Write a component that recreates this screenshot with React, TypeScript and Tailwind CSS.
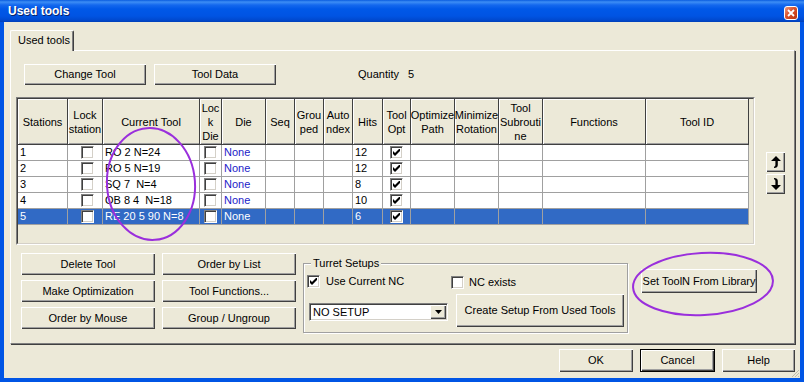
import React from 'react'

const raised = 'shadow-[inset_1px_1px_0_#ffffff,inset_-1px_-1px_0_#404040,inset_-2px_-2px_0_#a0a0a0]'
const sunken = 'border border-t-[#808080] border-l-[#808080] border-r-white border-b-white shadow-[inset_1px_1px_0_#404040,inset_-1px_-1px_0_#d4d0c8]'

const cols = [
  { w: 'w-[50px]', h: 'Stations' },
  { w: 'w-[35px]', h: 'Lock\nstation' },
  { w: 'w-[97px]', h: 'Current Tool' },
  { w: 'w-[22px]', h: 'Loc\nk\nDie' },
  { w: 'w-[44px]', h: 'Die' },
  { w: 'w-[29px]', h: 'Seq' },
  { w: 'w-[29px]', h: 'Grou\nped' },
  { w: 'w-[29px]', h: 'Auto\nndex' },
  { w: 'w-[30px]', h: 'Hits' },
  { w: 'w-[28px]', h: 'Tool\nOpt' },
  { w: 'w-[44px]', h: 'Optimize\nPath' },
  { w: 'w-[44px]', h: 'Minimize\nRotation' },
  { w: 'w-[44px]', h: 'Tool\nSubrouti\nne' },
  { w: 'w-[103px]', h: 'Functions' },
  { w: 'w-[103px]', h: 'Tool ID' },
]

const rows = [
  { st: '1', tool: 'RO 2 N=24', hits: '12', sel: false },
  { st: '2', tool: 'RO 5 N=19', hits: '12', sel: false },
  { st: '3', tool: 'SQ 7  N=4', hits: '8', sel: false },
  { st: '4', tool: 'OB 8 4  N=18', hits: '10', sel: false },
  { st: '5', tool: 'RE 20 5 90 N=8', hits: '6', sel: true },
]

function Btn({ className = '', children, def = false }: { className?: string; children?: React.ReactNode; def?: boolean }) {
  return (
    <div className={`shrink-0 flex items-center justify-center bg-[#ECE9D8] ${raised} ${def ? 'border border-black' : ''} ${className}`}>
      {children}
    </div>
  )
}

function Check({ checked = false }: { checked?: boolean }) {
  return (
    <div className={`shrink-0 w-[13px] h-[13px] bg-white flex items-center justify-center ${sunken}`}>
      {checked && (
        <svg width="7" height="7" viewBox="0 0 7 7">
          <polygon points="0,2 2,4 7,-1 7,2 2,7 0,5" fill="black" />
        </svg>
      )}
    </div>
  )
}

function Arrow({ down = false }: { down?: boolean }) {
  return (
    <svg width="10" height="12" viewBox="0 0 10 12" className={down ? 'rotate-180 -scale-x-100' : ''}>
      <path d="M5 0 L10 5 L6.8 5 L6.8 9 Q6.8 12 3 12 L3 10.8 Q4.4 10.5 4.4 9 L4.4 5 L0 5 Z" fill="black" />
    </svg>
  )
}

function Grid() {
  return (
    <div className="shrink-0 w-[739px] h-[148px] border border-t-[#808080] border-l-[#808080] border-r-white border-b-white">
      <div className="w-full h-full overflow-hidden bg-[#ECE9D8] border border-t-[#404040] border-l-[#404040] border-r-[#d4d0c8] border-b-[#d4d0c8]">
        {/* Header */}
        <div className="flex w-[731px] h-[46px] border-b border-b-[#404040]">
          {cols.map((c) => (
            <div
              key={c.h}
              className={`${c.w} shrink-0 h-full flex items-center justify-center text-center whitespace-pre leading-[14px] overflow-hidden border-r border-r-[#404040] shadow-[inset_1px_1px_0_#ffffff,inset_0_-1px_0_#a0a0a0]`}
            >
              {c.h}
            </div>
          ))}
        </div>
        {/* Rows */}
        {rows.map((r) => (
          <div key={r.st} className={`flex w-[731px] h-[16px] ${r.sel ? 'bg-[#316AC5] text-white' : 'bg-white'}`}>
            {cols.map((c, i) => (
              <div
                key={i}
                className={`${c.w} shrink-0 h-full flex items-center overflow-hidden whitespace-pre border-r border-b border-[#a0a0a0] ${
                  i === 1 || i === 3 || i === 9 ? 'justify-center' : 'pl-[2px]'
                } ${i === 1 ? 'pl-[5px]' : ''}`}
              >
                {i === 0 && r.st}
                {i === 1 && <Check />}
                {i === 2 && r.tool}
                {i === 3 && <Check />}
                {i === 4 && <span className={r.sel ? 'text-white' : 'text-[#1c1cc8]'}>None</span>}
                {i === 8 && r.hits}
                {i === 9 && <Check checked />}
              </div>
            ))}
          </div>
        ))}
      </div>
    </div>
  )
}

export default function App() {
  return (
    <div className="relative w-[804px] h-[382px] overflow-hidden flex flex-col bg-[#0055E5] font-['Liberation_Sans',Arial,sans-serif] text-[11px] text-black">
      {/* Title bar */}
      <div className="h-[22px] shrink-0 flex items-start justify-between pl-[8px] pr-[6px] bg-[linear-gradient(180deg,#0A5CDF_0px,#3D8EF5_2px,#1468EE_5px,#0058E8_9px,#0054E3_16px,#0049CF_20px,#003FB8_22px)]">
        <span className="mt-[4px] text-white font-bold text-[12px] leading-[15px] [text-shadow:1px_1px_0_#0a246a]">Used tools</span>
        <div className="mt-[6px] w-[14px] h-[14px] rounded-[3px] border border-white bg-[linear-gradient(135deg,#EE9A7E,#D9502A_45%,#B7340F)] flex items-center justify-center">
          <svg width="8" height="8" viewBox="0 0 8 8">
            <path d="M1 1 L7 7 M7 1 L1 7" stroke="white" strokeWidth="1.8" />
          </svg>
        </div>
      </div>

      {/* Body */}
      <div className="relative flex-1 mx-[4px] mb-[4px] bg-[#ECE9D8] flex flex-col">
        {/* Tab */}
        <div className="relative z-10 ml-[6px] mt-[8px] -mb-[1px] w-[64px] h-[21px] bg-[#ECE9D8] border-t border-l border-r border-t-white border-l-white border-r-[#404040] shadow-[inset_-1px_0_0_#808080] rounded-t-[2px] flex items-center pl-[7px] pb-[1px]">
          Used tools
        </div>

        {/* Tab page */}
        <div className="ml-[6px] w-[785px] h-[294px] border border-t-white border-l-white border-r-[#808080] border-b-[#808080] shadow-[1px_1px_0_#404040] flex flex-col">
          <div className="mt-[13px] ml-[13px] h-[21px] flex items-center">
            <Btn className="w-[122px] h-[21px]">Change Tool</Btn>
            <Btn className="ml-[8px] w-[122px] h-[21px]">Tool Data</Btn>
            <span className="ml-[82px]">Quantity</span>
            <span className="ml-[9px]">5</span>
          </div>

          <div className="mt-[12px] ml-[5px] flex">
            <Grid />
            <div className="ml-[11px] mt-[55px] flex flex-col gap-[2px]">
              <Btn className="w-[19px] h-[20px]"><Arrow /></Btn>
              <Btn className="w-[19px] h-[20px]"><Arrow down /></Btn>
            </div>
          </div>

          <div className="mt-[8px] ml-[10px] flex items-start">
            <div className="grid grid-cols-[134px_134px] gap-x-[7px] gap-y-[5px]">
              <Btn className="h-[22px]">Delete Tool</Btn>
              <Btn className="h-[22px]">Order by List</Btn>
              <Btn className="h-[22px]">Make Optimization</Btn>
              <Btn className="h-[22px]">Tool Functions...</Btn>
              <Btn className="h-[22px]">Order by Mouse</Btn>
              <Btn className="h-[22px]">Group / Ungroup</Btn>
            </div>

            {/* Turret Setups group */}
            <div className="relative ml-[7px] mt-[10px] w-[325px] h-[70px] border border-[#a0a0a0] shadow-[inset_1px_1px_0_#ffffff,1px_1px_0_#ffffff] flex pt-[11px] pl-[3px]">
              <span className="absolute -top-[7px] left-[7px] px-[2px] bg-[#ECE9D8] leading-[13px]">Turret Setups</span>
              <div className="w-[144px] flex flex-col">
                <div className="h-[13px] flex items-center">
                  <Check checked />
                  <span className="ml-[6px]">Use Current NC</span>
                </div>
                <div className={`mt-[15px] ml-[2px] w-[139px] h-[18px] bg-white flex items-center justify-between pr-[1px] ${sunken}`}>
                  <span className="pl-[3px]">NO SETUP</span>
                  <Btn className="w-[16px] h-[14px]">
                    <svg width="7" height="4" viewBox="0 0 7 4">
                      <polygon points="0,0 7,0 3.5,4" fill="black" />
                    </svg>
                  </Btn>
                </div>
              </div>
              <div className="flex flex-col">
                <div className="mt-[1px] h-[13px] flex items-center">
                  <Check />
                  <span className="ml-[5px]">NC exists</span>
                </div>
                <Btn className="ml-[5px] mt-[5px] w-[168px] h-[33px]">Create Setup From Used Tools</Btn>
              </div>
            </div>

            <Btn className="ml-[13px] mt-[16px] w-[116px] h-[24px]">Set ToolN From Library</Btn>
          </div>
        </div>

        {/* Dialog buttons */}
        <div className="mt-[5px] pr-[5px] flex justify-end gap-[7px]">
          <Btn className="w-[74px] h-[23px]">OK</Btn>
          <Btn def className="w-[75px] h-[23px]">Cancel</Btn>
          <Btn className="w-[73px] h-[23px]">Help</Btn>
        </div>

        {/* Size grip */}
        <svg className="absolute right-0 bottom-0" width="10" height="10" viewBox="0 0 10 10">
          <path d="M9 2 L2 9 M9 5 L5 9 M9 8 L8 9" stroke="#c0bcaa" strokeWidth="1" />
        </svg>
      </div>

      {/* Annotation ellipses */}
      <svg className="absolute inset-0 pointer-events-none" width="804" height="382">
        <ellipse cx="151" cy="184" rx="44" ry="56" transform="rotate(-4 151 184)" fill="none" stroke="#9a2fdc" strokeWidth="2" />
        <ellipse cx="703" cy="284" rx="70" ry="31" transform="rotate(-3 703 284)" fill="none" stroke="#9a2fdc" strokeWidth="2" />
      </svg>
    </div>
  )
}
